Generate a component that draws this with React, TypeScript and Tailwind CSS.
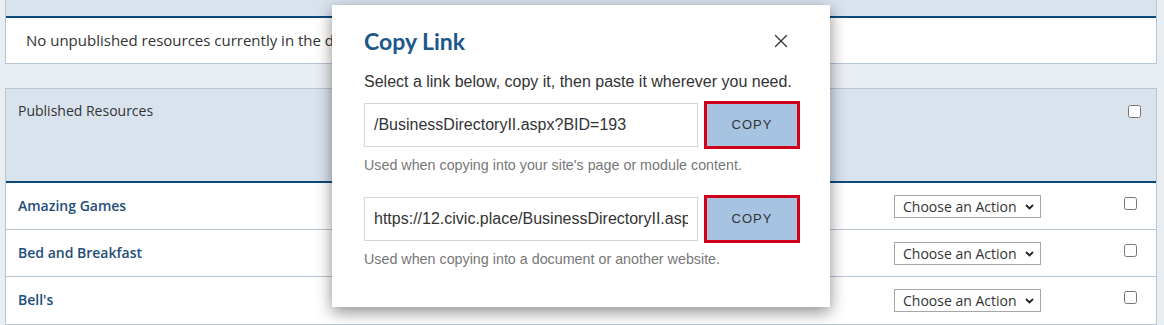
import { X } from 'lucide-react';

const rows = ['Amazing Games', 'Bed and Breakfast', "Bell's"];

function ActionSelect() {
  return (
    <div className="flex h-[23px] w-[147px] items-center justify-between border border-[#a6a6a6] bg-white pl-[8px] pr-[6px] text-[14px] text-[#333]">
      <span>Choose an Action</span>
      <svg width="9" height="6" viewBox="0 0 9 6" className="mt-[1px]">
        <path d="M1 1l3.5 3.5L8 1" fill="none" stroke="#222" strokeWidth="1.8" />
      </svg>
    </div>
  );
}

function LinkRow({ value }: { value: string }) {
  return (
    <div className="flex items-center gap-[6px]">
      <input
        readOnly
        value={value}
        className="h-[44px] w-[334px] border border-[#cfd6de] bg-white px-[9px] text-[16px] text-[#333] outline-none"
      />
      <button className="flex h-[48px] w-[96px] items-center justify-center border-[3px] border-[#d0021b] bg-[#a6c3e2] text-[13px] tracking-[1px] text-[#333]">
        COPY
      </button>
    </div>
  );
}

export default function App() {
  return (
    <div className="relative min-h-[325px] bg-[#e9eef3] pl-[5px] font-['Open_Sans',sans-serif]">
      <div className="w-[1152px]">
        {/* unpublished */}
        <div className="border-x border-b border-[#b8c5d3] bg-white">
          <div className="h-[18px] border-b-2 border-[#0e4a7a] bg-[#d9e3ee]" />
          <div className="flex h-[45px] items-center pl-[20px] text-[15px] text-[#333]">
            No unpublished resources currently in the database.
          </div>
        </div>

        {/* published */}
        <div className="mt-[24px] border border-[#b8c5d3] bg-white">
          <div className="flex h-[94px] items-start justify-between border-b-2 border-[#0e4a7a] bg-[#d9e3ee] pl-[12px] pr-[15px] pt-[11px]">
            <span className="text-[14px] text-[#333]">Published Resources</span>
            <input type="checkbox" className="mt-[5px] h-[13px] w-[13px]" />
          </div>
          {rows.map((name, i) => (
            <div
              key={name}
              className={`flex h-[47px] items-start pl-[12px] pr-[19px] ${i < rows.length - 1 ? 'border-b border-[#b8c5d3]' : ''}`}
            >
              <span className="mt-[12px] flex-1 text-[14px] font-semibold text-[#1f4e79]">{name}</span>
              <div className="mt-[12px]">
                <ActionSelect />
              </div>
              <input type="checkbox" className="ml-[83px] mt-[14px] h-[13px] w-[13px]" />
            </div>
          ))}
        </div>
      </div>

      {/* Copy Link dialog */}
      <div className="absolute left-[332px] top-[5px] flex w-[498px] flex-col bg-white pb-[38px] pl-[32px] pr-[30px] pt-[22px] font-['Liberation_Sans',sans-serif] shadow-[0_5px_15px_rgba(0,0,0,0.45)]">
        <div className="flex items-center justify-between pr-[8px]">
          <h2 className="font-['Lato',sans-serif] text-[23px] font-bold leading-[28px] text-[#1b5788]">Copy Link</h2>
          <X size={22} strokeWidth={1.4} className="text-[#333]" />
        </div>
        <p className="mt-[15px] text-[16px] leading-[24px] text-[#333]">
          Select a link below, copy it, then paste it wherever you need.
        </p>
        <div className="mt-[7px]">
          <LinkRow value="/BusinessDirectoryII.aspx?BID=193" />
        </div>
        <p className="mt-[6px] text-[14.3px] leading-[20px] text-[#777]">
          Used when copying into your site's page or module content.
        </p>
        <div className="mt-[20px]">
          <LinkRow value="https://12.civic.place/BusinessDirectoryII.aspx?BID=193" />
        </div>
        <p className="mt-[6px] text-[14.3px] leading-[20px] text-[#777]">
          Used when copying into a document or another website.
        </p>
      </div>
    </div>
  );
}
